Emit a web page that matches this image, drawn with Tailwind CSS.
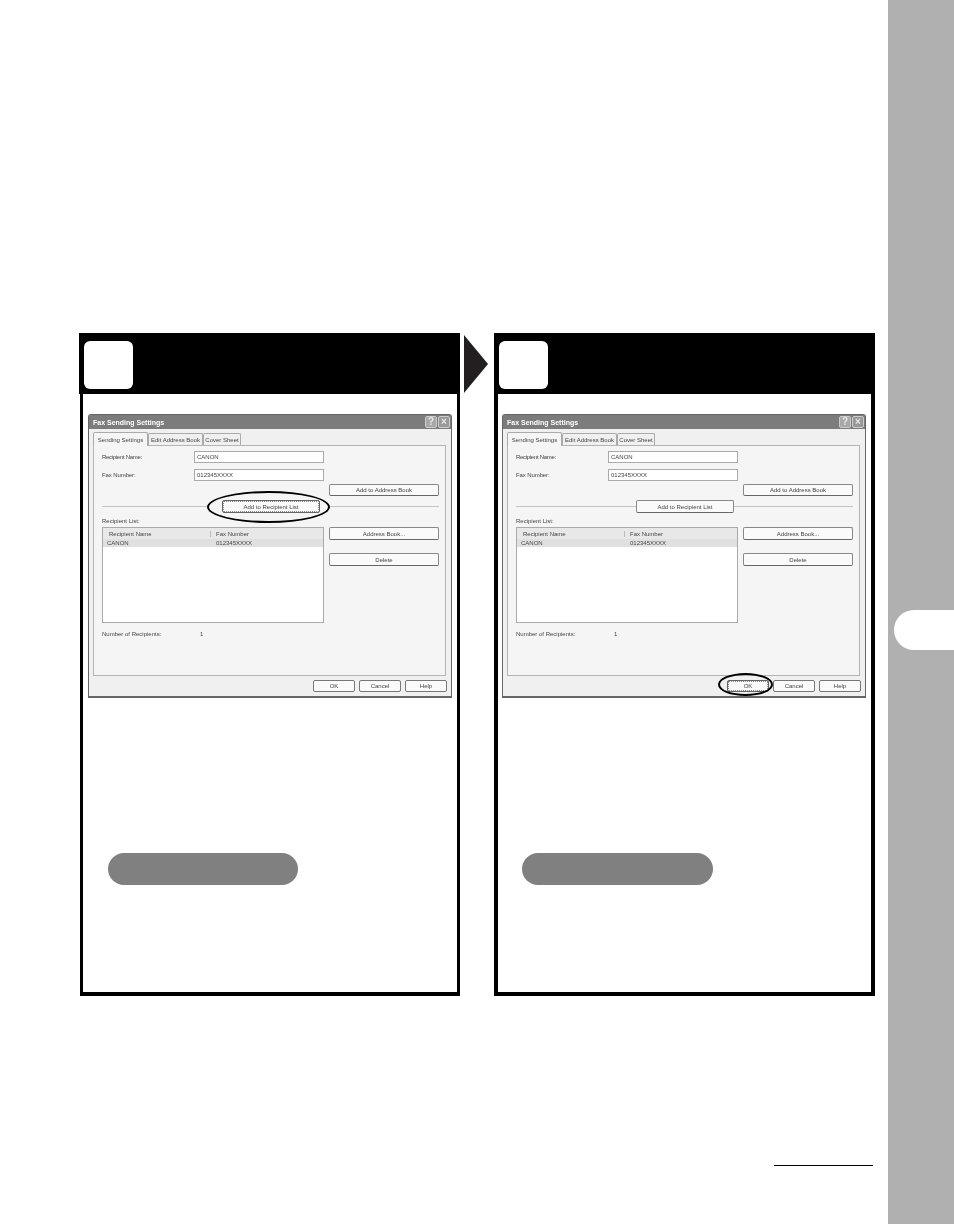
<!DOCTYPE html>
<html lang="en">
<head>
    <meta charset="UTF-8">
    <title>Fax Sending Settings</title>
    <script src="https://cdn.jsdelivr.net/npm/@tailwindcss/browser@4"></script>
</head>
<body class="bg-white font-['Liberation_Sans',Arial,sans-serif]">
<div class="flex h-[1224px] w-[954px] overflow-hidden">
    <main class="w-[888px] pl-[79px] pt-[333px]">
        <div class="flex items-start">
            <!-- step 1 -->
            <section class="w-[381px]">
                <div class="h-[61px] bg-black pl-[5px] pt-[8px]">
                    <div class="h-[48px] w-[49px] rounded-[6px] bg-white"></div>
                </div>
                <div class="ml-px h-[602px] w-[380px] border-x-[3px] border-b-4 border-black pl-[5px] pt-[20px]">
                    <div class="relative h-[284px] w-[364px] whitespace-nowrap rounded-t-[3px] border border-b-2 border-[#666] bg-[#f0f0f0] text-[6px] leading-none text-[#444] blur-[0.3px]">
                        <div class="flex h-[14px] items-center justify-between bg-[#7c7c7c] pl-[4px] pr-[1px] text-[7px] font-bold text-white">
                            <span>Fax Sending Settings</span>
                            <div class="flex gap-px">
                                <span class="flex h-[12px] w-[12px] items-center justify-center rounded-[2px] border border-[#ccc] bg-[#a8a8a8] text-[10px] font-bold text-[#e8e8e8]">?</span>
                                <span class="flex h-[12px] w-[12px] items-center justify-center rounded-[2px] border border-[#ccc] bg-[#999] text-[10px] font-bold text-[#e8e8e8]">×</span>
                            </div>
                        </div>
                        <div class="mt-[3px] flex h-[13px] pl-[4px]">
                            <span class="z-10 flex h-[14px] w-[55px] items-center justify-center rounded-t-[2px] border border-b-0 border-[#aaa] bg-[#f5f5f5]">Sending Settings</span>
                            <span class="mt-px flex h-[12px] w-[55px] items-center justify-center rounded-t-[2px] border border-b-0 border-[#aaa] bg-[#f0f0f0]">Edit Address Book</span>
                            <span class="mt-px flex h-[12px] w-[38px] items-center justify-center rounded-t-[2px] border border-b-0 border-[#aaa] bg-[#f0f0f0]">Cover Sheet</span>
                        </div>
                        <div class="ml-[4px] h-[231px] w-[353px] border border-[#b4b4b4] bg-[#f5f5f5] pl-[8px] pt-[5px]">
                            <div class="flex h-[12px] items-center">
                                <span class="w-[92px] tracking-[-0.3px]">Recipient Name:</span>
                                <span class="flex h-[12px] w-[130px] items-center border border-[#aaa] bg-white pl-[2px]">CANON</span>
                            </div>
                            <div class="mt-[6px] flex h-[12px] items-center">
                                <span class="w-[92px] tracking-[-0.1px]">Fax Number:</span>
                                <span class="flex h-[12px] w-[130px] items-center border border-[#aaa] bg-white pl-[2px]">012345XXXX</span>
                            </div>
                            <div class="ml-[227px] mt-[3px] flex h-[12px] w-[110px] items-center justify-center rounded-[2px] border border-[#888] border-b-[#666] bg-[#fafafa]">Add to Address Book</div>
                            <div class="mt-[4px] flex h-[13px] items-center">
                                <span class="h-px w-[106px] bg-[#c4c4c4]"></span>
                                <span class="ml-[14px] flex h-[13px] w-[98px] items-center justify-center rounded-[2px] border border-[#666] bg-[#fafafa] outline-1 -outline-offset-2 outline-dotted outline-[#888]">Add to Recipient List</span>
                                <span class="ml-[10px] h-px w-[109px] bg-[#c4c4c4]"></span>
                            </div>
                            <div class="mt-[3px] flex h-[10px] items-center">Recipient List:</div>
                            <div class="mt-px flex">
                                <div class="h-[96px] w-[222px] border border-[#aaa] bg-white">
                                    <div class="flex h-[11px] items-center bg-[#e8e8e8]">
                                        <span class="w-[108px] border-r border-[#bbb] pl-[6px]">Recipient Name</span>
                                        <span class="pl-[5px]">Fax Number</span>
                                    </div>
                                    <div class="flex h-[8px] items-center bg-[#e0e0e0]">
                                        <span class="w-[109px] pl-[4px]">CANON</span>
                                        <span class="pl-[4px]">012345XXXX</span>
                                    </div>
                                </div>
                                <div class="ml-[5px] w-[110px]">
                                    <div class="flex h-[13px] items-center justify-center rounded-[2px] border border-[#888] border-b-[#666] bg-[#fafafa]">Address Book...</div>
                                    <div class="mt-[13px] flex h-[13px] items-center justify-center rounded-[2px] border border-[#888] border-b-[#666] bg-[#fafafa]">Delete</div>
                                </div>
                            </div>
                            <div class="mt-[6px] flex h-[10px] items-center">
                                <span class="w-[98px]">Number of Recipients:</span>
                                <span>1</span>
                            </div>
                        </div>
                        <div class="mr-[4px] mt-[4px] flex justify-end gap-[4px]">
                            <span class="flex h-[12px] w-[42px] items-center justify-center rounded-[2px] border border-[#777] bg-[#fafafa]">OK</span>
                            <span class="flex h-[12px] w-[42px] items-center justify-center rounded-[2px] border border-[#777] bg-[#fafafa]">Cancel</span>
                            <span class="flex h-[12px] w-[42px] items-center justify-center rounded-[2px] border border-[#777] bg-[#fafafa]">Help</span>
                        </div>
                        <!-- callout round the button -->
                        <div class="absolute left-[118px] top-[76px] h-[32px] w-[123px] rounded-[50%] border-2 border-black"></div>
                    </div>
                    <div class="ml-[20px] mt-[155px] h-[32px] w-[190px] rounded-full bg-[#808080]"></div>
                </div>
            </section>

            <div class="ml-[4px] mr-[6px] mt-[2px] h-0 w-0 border-y-[29px] border-l-[24px] border-y-transparent border-l-[#231f20]"></div>

            <!-- step 2 -->
            <section class="w-[381px]">
                <div class="h-[61px] bg-black pl-[5px] pt-[8px]">
                    <div class="h-[48px] w-[49px] rounded-[6px] bg-white"></div>
                </div>
                <div class="h-[602px] w-[381px] border-x-4 border-b-4 border-black pl-[4px] pt-[20px]">
                    <div class="relative h-[284px] w-[364px] whitespace-nowrap rounded-t-[3px] border border-b-2 border-[#666] bg-[#f0f0f0] text-[6px] leading-none text-[#444] blur-[0.3px]">
                        <div class="flex h-[14px] items-center justify-between bg-[#7c7c7c] pl-[4px] pr-[1px] text-[7px] font-bold text-white">
                            <span>Fax Sending Settings</span>
                            <div class="flex gap-px">
                                <span class="flex h-[12px] w-[12px] items-center justify-center rounded-[2px] border border-[#ccc] bg-[#a8a8a8] text-[10px] font-bold text-[#e8e8e8]">?</span>
                                <span class="flex h-[12px] w-[12px] items-center justify-center rounded-[2px] border border-[#ccc] bg-[#999] text-[10px] font-bold text-[#e8e8e8]">×</span>
                            </div>
                        </div>
                        <div class="mt-[3px] flex h-[13px] pl-[4px]">
                            <span class="z-10 flex h-[14px] w-[55px] items-center justify-center rounded-t-[2px] border border-b-0 border-[#aaa] bg-[#f5f5f5]">Sending Settings</span>
                            <span class="mt-px flex h-[12px] w-[55px] items-center justify-center rounded-t-[2px] border border-b-0 border-[#aaa] bg-[#f0f0f0]">Edit Address Book</span>
                            <span class="mt-px flex h-[12px] w-[38px] items-center justify-center rounded-t-[2px] border border-b-0 border-[#aaa] bg-[#f0f0f0]">Cover Sheet</span>
                        </div>
                        <div class="ml-[4px] h-[231px] w-[353px] border border-[#b4b4b4] bg-[#f5f5f5] pl-[8px] pt-[5px]">
                            <div class="flex h-[12px] items-center">
                                <span class="w-[92px] tracking-[-0.3px]">Recipient Name:</span>
                                <span class="flex h-[12px] w-[130px] items-center border border-[#aaa] bg-white pl-[2px]">CANON</span>
                            </div>
                            <div class="mt-[6px] flex h-[12px] items-center">
                                <span class="w-[92px] tracking-[-0.1px]">Fax Number:</span>
                                <span class="flex h-[12px] w-[130px] items-center border border-[#aaa] bg-white pl-[2px]">012345XXXX</span>
                            </div>
                            <div class="ml-[227px] mt-[3px] flex h-[12px] w-[110px] items-center justify-center rounded-[2px] border border-[#888] border-b-[#666] bg-[#fafafa]">Add to Address Book</div>
                            <div class="mt-[4px] flex h-[13px] items-center">
                                <span class="h-px w-[120px] bg-[#c4c4c4]"></span>
                                <span class="flex h-[13px] w-[98px] items-center justify-center rounded-[2px] border border-[#888] border-b-[#666] bg-[#fafafa]">Add to Recipient List</span>
                                <span class="h-px w-[119px] bg-[#c4c4c4]"></span>
                            </div>
                            <div class="mt-[3px] flex h-[10px] items-center">Recipient List:</div>
                            <div class="mt-px flex">
                                <div class="h-[96px] w-[222px] border border-[#aaa] bg-white">
                                    <div class="flex h-[11px] items-center bg-[#e8e8e8]">
                                        <span class="w-[108px] border-r border-[#bbb] pl-[6px]">Recipient Name</span>
                                        <span class="pl-[5px]">Fax Number</span>
                                    </div>
                                    <div class="flex h-[8px] items-center bg-[#e0e0e0]">
                                        <span class="w-[109px] pl-[4px]">CANON</span>
                                        <span class="pl-[4px]">012345XXXX</span>
                                    </div>
                                </div>
                                <div class="ml-[5px] w-[110px]">
                                    <div class="flex h-[13px] items-center justify-center rounded-[2px] border border-[#888] border-b-[#666] bg-[#fafafa]">Address Book...</div>
                                    <div class="mt-[13px] flex h-[13px] items-center justify-center rounded-[2px] border border-[#888] border-b-[#666] bg-[#fafafa]">Delete</div>
                                </div>
                            </div>
                            <div class="mt-[6px] flex h-[10px] items-center">
                                <span class="w-[98px]">Number of Recipients:</span>
                                <span>1</span>
                            </div>
                        </div>
                        <div class="mr-[4px] mt-[4px] flex justify-end gap-[4px]">
                            <span class="flex h-[12px] w-[42px] items-center justify-center rounded-[2px] border border-[#666] bg-[#fafafa] outline-1 -outline-offset-2 outline-dotted outline-[#888]">OK</span>
                            <span class="flex h-[12px] w-[42px] items-center justify-center rounded-[2px] border border-[#777] bg-[#fafafa]">Cancel</span>
                            <span class="flex h-[12px] w-[42px] items-center justify-center rounded-[2px] border border-[#777] bg-[#fafafa]">Help</span>
                        </div>
                        <!-- callout round the button -->
                        <div class="absolute left-[215px] top-[258px] h-[23px] w-[55px] rounded-[50%] border-2 border-black"></div>
                    </div>
                    <div class="ml-[20px] mt-[155px] h-[32px] w-[191px] rounded-full bg-[#808080]"></div>
                </div>
            </section>
        </div>
        <div class="ml-[695px] mt-[169px] h-px w-[99px] bg-black"></div>
    </main>
    <aside class="h-full w-[66px] bg-[#b0b0b0] pl-[6px] pt-[610px]">
        <div class="h-[40px] w-[60px] rounded-l-[20px] bg-white"></div>
    </aside>
</div>
</body>
</html>
